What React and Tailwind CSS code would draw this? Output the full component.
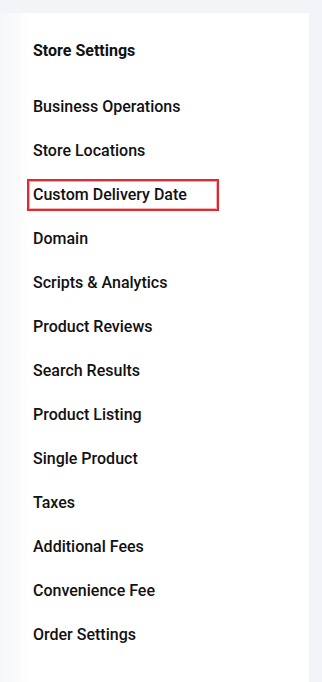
export default function App() {
  const items = [
    "Business Operations",
    "Store Locations",
    "Custom Delivery Date",
    "Domain",
    "Scripts & Analytics",
    "Product Reviews",
    "Search Results",
    "Product Listing",
    "Single Product",
    "Taxes",
    "Additional Fees",
    "Convenience Fee",
    "Order Settings",
  ];
  return (
    <div className="w-[322px] h-[682px] bg-[#f3f4f8] pt-[13px] pr-[13px] overflow-hidden" style={{ fontFamily: "Roboto, 'Liberation Sans', sans-serif" }}>
      <div className="h-full bg-white bg-[linear-gradient(to_right,#f6f7fa_0px,#fbfbfc_20px,#ffffff_28px)] pl-[33px]">
        <div className="h-[72px] flex items-center pt-[4px]">
          <span className="text-[16px] font-bold text-[#111]">Store Settings</span>
        </div>
        <ul className="flex flex-col">
          {items.map((t) =>
            t === "Custom Delivery Date" ? (
              <li key={t} className="h-[44px] flex items-center">
                <span className="-ml-[6px] w-[192px] h-[32px] flex items-center pl-[4px] border-2 border-[#e02a2f] shadow-[inset_0_0_0_1px_#f5b3b5] text-[16px] font-medium text-[#111]">
                  {t}
                </span>
              </li>
            ) : (
              <li key={t} className="h-[44px] flex items-center text-[16px] font-medium text-[#111]">
                {t}
              </li>
            )
          )}
        </ul>
      </div>
    </div>
  );
}
